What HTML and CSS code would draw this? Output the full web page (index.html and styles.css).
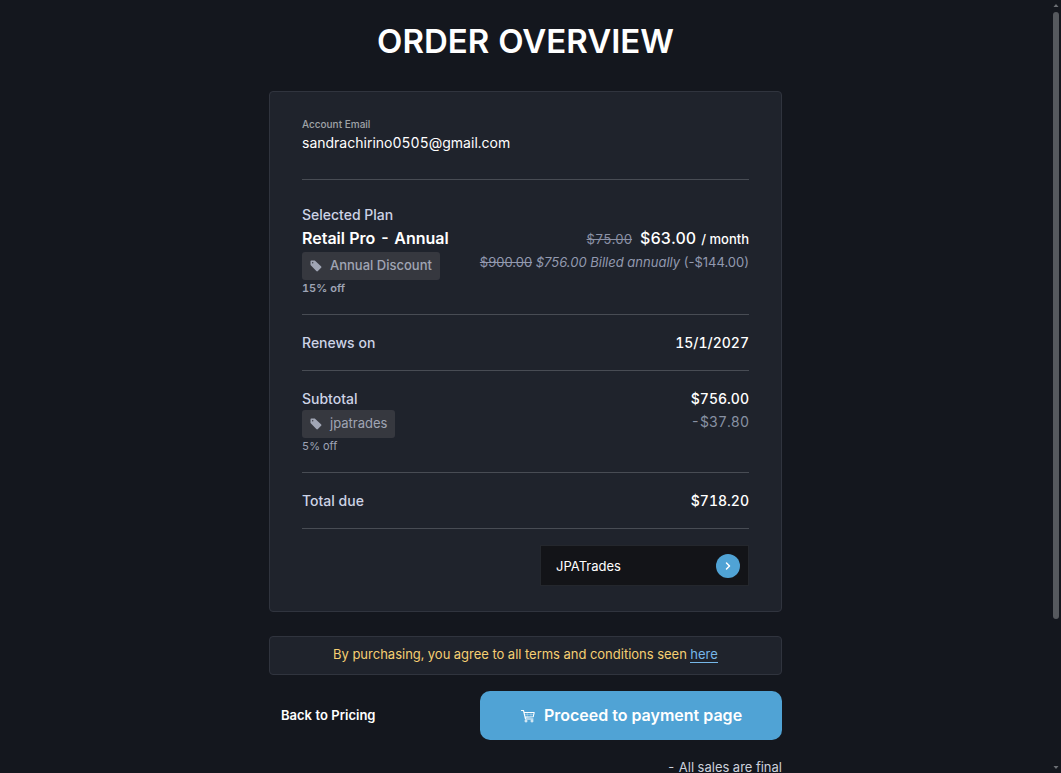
FILE: index.html
```html
<!DOCTYPE html>
<html lang="en">
<head>
<meta charset="utf-8">
<title>Order Overview</title>
<link rel="stylesheet" href="styles.css">
</head>
<body>
<div class="page">
  <main class="content">
    <h1 class="title">ORDER OVERVIEW</h1>
    <section class="card">
      <div class="account">
        <div class="account-label">Account Email</div>
        <div class="account-email">sandrachirino0505@gmail.com</div>
      </div>
      <div class="plan">
        <div class="label">Selected Plan</div>
        <div class="row">
          <div>
            <div class="plan-name">Retail Pro - Annual</div>
            <div class="badge strong"><svg class="tag" viewBox="0 0 12 12"><path d="M1.2.6h3.6l6.2 5.6c.6.5.6 1 .1 1.600L7.900 11c-.5.5-1.100.5-1.600 0L.5 4.900V1.300C.5.9.8.6 1.200.6Z" fill="currentColor"/><circle cx="2.700" cy="2.700" r=".7" fill="#36383f"/></svg>Annual Discount</div>
            <div class="off strong">15% off</div>
          </div>
          <div class="prices">
            <div class="price-line"><s class="old-price">$75.00</s><span class="price">$63.00</span><span class="per">/ month</span></div>
            <div class="billed"><s>$900.00</s> <em>$756.00 Billed annually</em> (-$144.00)</div>
          </div>
        </div>
      </div>
      <div class="line row">
        <div class="label">Renews on</div>
        <div class="amount">15/1/2027</div>
      </div>
      <div class="line subtotal row">
        <div>
          <div class="label">Subtotal</div>
          <div class="badge"><svg class="tag" viewBox="0 0 12 12"><path d="M1.2.6h3.6l6.2 5.6c.6.5.6 1 .1 1.600L7.900 11c-.5.5-1.100.5-1.600 0L.5 4.900V1.300C.5.9.8.6 1.200.6Z" fill="currentColor"/><circle cx="2.700" cy="2.700" r=".7" fill="#36383f"/></svg>jpatrades</div>
          <div class="off">5% off</div>
        </div>
        <div class="prices">
          <div class="amount">$756.00</div>
          <div class="amount minus">-$37.80</div>
        </div>
      </div>
      <div class="line row">
        <div class="label">Total due</div>
        <div class="amount">$718.20</div>
      </div>
      <form class="coupon">
        <input class="coupon-input" type="text" value="JPATrades" aria-label="Discount code">
        <button class="coupon-apply" type="button" aria-label="Apply code"><svg class="chevron" viewBox="0 0 12 12"><path d="M4.500 3 7.500 6 4.500 9" fill="none" stroke="currentColor" stroke-width="1.500" stroke-linecap="round" stroke-linejoin="round"/></svg></button>
      </form>
    </section>
    <p class="terms">By purchasing, you agree to all terms and conditions seen <a class="terms-link" href="#">here</a></p>
    <div class="actions">
      <a class="back" href="#">Back to Pricing</a>
      <button class="proceed" type="button"><svg class="cart" viewBox="0 0 16 16"><path d="M1.500 2.500h2l2 8.500h7.500M3.900 4.500h10.300l-1 4.300-8.300.3" fill="none" stroke="currentColor" stroke-width="1.100" stroke-linecap="round" stroke-linejoin="round"/><path d="M4.400 6.500h9.300M7.200 4.500v4.500M11 4.500v4.500" fill="none" stroke="currentColor" stroke-width=".3"/><circle cx="6" cy="13" r="1" fill="none" stroke="currentColor"/><circle cx="12" cy="13" r="1" fill="none" stroke="currentColor"/></svg>Proceed to payment page</button>
    </div>
    <p class="note">- All sales are final</p>
  </main>
  <div class="scrollbar" aria-hidden="true">
    <svg class="arrow" viewBox="0 0 10 12"><path d="M5 4 7.500 7h-5Z" fill="#6c7075"/></svg>
    <div class="track"><div class="thumb"></div></div>
    <svg class="arrow" viewBox="0 0 10 12"><path d="M2.500 5h5L5 8Z" fill="#6c7075"/></svg>
  </div>
</div>
</body>
</html>
```
FILE: styles.css
```css
* { box-sizing: border-box; }
body {
  margin: 0;
  background: #14171e;
  color: #fff;
  font-family: Inter, "Liberation Sans", sans-serif;
  font-size: 14px;
  font-variant-numeric: tabular-nums;
}
.page { display: flex; height: 100vh; overflow: hidden; }
.content {
  flex: 1;
  display: flex;
  flex-direction: column;
  align-items: center;
}
.content > * { width: 100%; max-width: 513px; flex-shrink: 0; }
.title {
  margin: 21px 0 30px;
  font-size: 33px;
  line-height: 40px;
  font-weight: 600;
  text-align: center;
}
.card {
  padding: 24px 32px;
  background: #1f232c;
  border: 1px solid #30343e;
  border-radius: 4px;
}
.row { display: flex; justify-content: space-between; }
.account { padding-bottom: 26px; border-bottom: 1px solid #484c54; }
.account-label { font-size: 10px; line-height: 16px; font-weight: 500; color: #a0a4a8; }
.account-email { font-size: 14px; line-height: 21px; font-weight: 400; color: #fff; }
.plan { padding: 23px 0 18px; border-bottom: 1px solid #484c54; }
.label { font-size: 14px; line-height: 23px; font-weight: 500; color: #cdd3e6; }
.plan-name { margin-bottom: 2px; font-size: 16px; line-height: 24px; font-weight: 600; }
.badge {
  display: flex;
  align-items: center;
  gap: 8px;
  width: max-content;
  height: 28px;
  padding: 0 8px 2px;
  border-radius: 3px;
  background: #36383f;
  color: #a0a5b4;
  font-size: 13px;
}
.strong { font-weight: 600; }
.badge.strong { font-weight: 500; }
.tag { width: 12px; height: 12px; margin-top: 2px; }
.off { font-size: 11px; line-height: 16px; color: #9ea4b5; }
.prices { text-align: right; }
.price-line { display: flex; align-items: baseline; justify-content: flex-end; line-height: 24px; }
.old-price { margin-right: 8px; font-size: 13px; color: #8c92a6; }
.price { margin-right: 5px; font-size: 16px; font-weight: 500; }
.per { font-size: 13px; font-weight: 500; }
.billed { font-size: 13px; line-height: 23px; font-variant-numeric: normal; color: #9299af; }
.line { padding: 16px 0; border-bottom: 1px solid #484c54; }
.subtotal { padding-bottom: 18px; }
.amount { font-size: 14px; line-height: 23px; font-weight: 500; }
.minus { font-weight: 400; color: #8891a3; }
.coupon {
  display: flex;
  align-items: center;
  width: 209px;
  height: 41px;
  margin: 16px 0 1px auto;
  padding: 0 8px 0 15px;
  background: #131418;
  border: 1px solid #24272d;
}
.coupon-input {
  flex: 1;
  min-width: 0;
  padding: 0;
  border: 0;
  outline: 0;
  background: transparent;
  color: #fff;
  font: 400 13px/20px Inter, sans-serif;
}
.coupon-apply {
  display: flex;
  align-items: center;
  justify-content: center;
  width: 24px;
  height: 24px;
  padding: 0;
  border: 0;
  border-radius: 50%;
  background: #50a3d5;
  color: #fff;
}
.chevron { width: 12px; height: 12px; }
.terms {
  margin: 24px 0 16px;
  padding: 7px 8px 9px;
  border: 1px solid #30343e;
  border-radius: 4px;
  background: #1f232c;
  color: #f6cf72;
  font-size: 13px;
  line-height: 21px;
  text-align: center;
}
.terms-link { color: #76b7e8; text-decoration: none; border-bottom: 1px solid #76b7e8; }
.actions { display: flex; align-items: center; justify-content: space-between; padding-left: 12px; }
.back { padding-bottom: 2px; color: #fff; font-size: 13px; font-weight: 600; text-decoration: none; }
.proceed {
  display: flex;
  align-items: center;
  justify-content: center;
  gap: 8px;
  width: 302px;
  height: 49px;
  padding: 0 0 2px;
  border: 0;
  border-radius: 10px;
  background: #50a3d5;
  color: #fff;
  font: 600 16px/24px Inter, sans-serif;
}
.cart { width: 16px; height: 16px; margin-top: 2px; }
.note { margin: 17px 0 0; font-size: 13px; line-height: 20px; color: #cdd1dc; text-align: right; }
.scrollbar { display: flex; flex-direction: column; width: 10px; background: #14171e; }
.arrow { width: 10px; height: 12px; }
.track { flex: 1; padding: 0 2px; }
.thumb { height: 81%; border-radius: 3px; background: #56595e; }
```
